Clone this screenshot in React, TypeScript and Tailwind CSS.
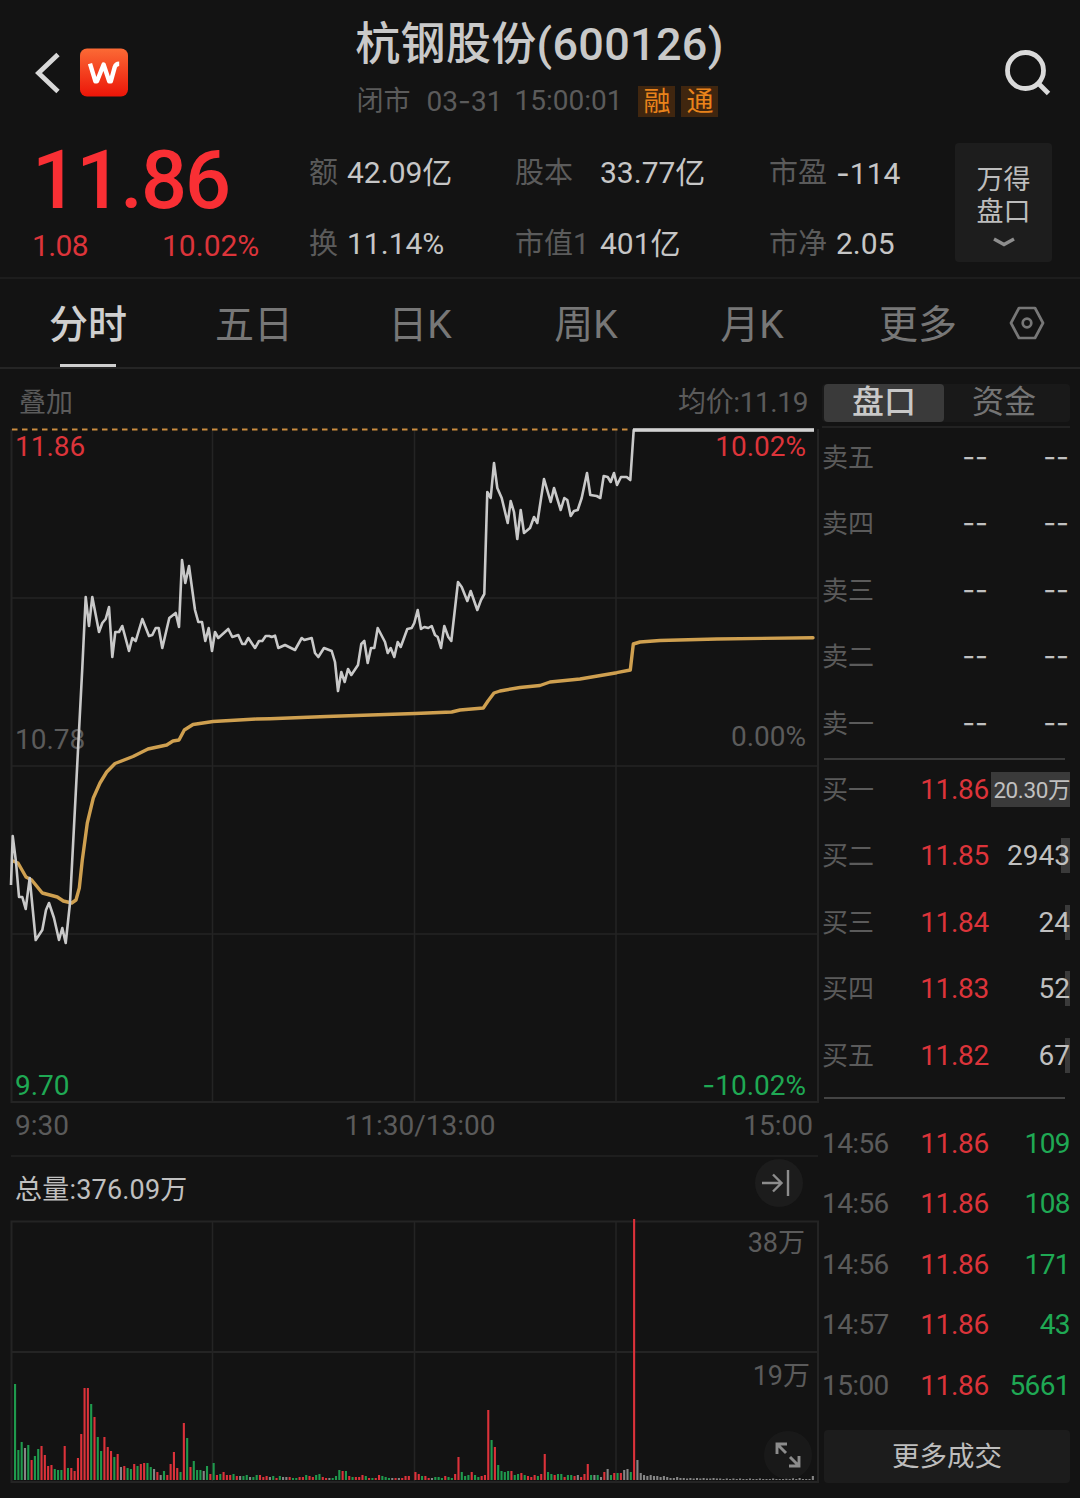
const PRICE_LINE =
  '11,885 12.7,836 16,862 19,897 22.3,897 25.7,909 29.7,878 35.7,940 42.3,930 46,910 49,903 54,918 59,940 62.3,928 65.7,943 70,903 ' +
  '82.3,668 85.7,597 89,626 92.3,597 99,632 102.3,623 105.7,619 109,607 112.3,657 115.3,632 119,632 122.3,626 129,651 132.3,638 135.7,641 ' +
  '142.3,619 149,636 152.3,635 155.7,628 158.7,628 162.3,648 169.3,618 175.7,613 179,627 182,560 185.3,583 189,566 195,610 198.3,622 202,622 ' +
  '205.3,641 208.7,628 212,651 215,632 218.3,638 228.3,629 232.3,637 238.3,635 242.3,644 245,644 248.3,638 255,648 259,641 262.3,641 265.7,636 ' +
  '269.3,636 271.7,637 275,635.7 278.3,648 285,645 295,650 301.7,638 304.3,640 311.7,638 315,653 318.3,657 324,648 331.7,651 335,662 338,691 ' +
  '341.3,672 344.7,682 348,669 351.3,675 358,665 361.3,644 364.3,641 367.7,663 371,648 374.3,648 377.7,628 385,642 387.7,653 390.7,648 394.3,657 ' +
  '397.7,642 400.7,647 407.3,629 411.7,628 414.3,623 417.7,610 421,629 424.3,627 428.3,628 431.7,626 435,635 437.7,637 441,648 444.3,626 448.3,637 ' +
  '451.3,641 458,582 461.7,587 467.3,601 470.7,591 477.3,610 481,600 484.3,594 487.3,492 490.7,498 494,463 497.3,488 501.7,498 507.7,523 510.7,501 ' +
  '514,512 517.3,539 520.7,510 524,533 530,528 534,517 537.3,523 544,479 550.7,502 554,488 560.7,510 564.3,498 567.3,500 570.7,516 574,511 ' +
  '577.7,510 581.7,498 587,473 590.3,495 596.7,496 600.3,498 603.7,476 607.7,477 610.7,482 614,473 617,485 621,477 626.7,477 630.3,480 633.7,430 814,430';

const AVG_LINE =
  '13,861 18,863 26,877 31.7,880 42.3,893 57.3,897 63.3,901 71.7,903 76,900 79.3,888 82.3,860 87.3,823 93.3,798 100,783 106.7,772 115,763.5 ' +
  '133,756.5 148,749 166.7,745 173,741 179,740 184.3,730 193,724.5 213,721.5 256.7,719 270,718.7 326.7,716.5 415,713.5 451.7,712 460,710 483.3,708 ' +
  '488,701 494,693 500,691 520,687.5 540,685.5 550,682 580,679 616.7,672.7 630.3,670 633.3,644 640,642 660,640.5 716.7,639 813,637.7';

// r / g / w = up / down / flat, followed by the bar height
const VOLUME = [
  {
    x: 15,
    bars:
      'g96 g30 g38 w32 g35 r20 g24 g31 r34 r25 r14 r15 g11 g10 g10 r34 g12 r12 r9 r22 r46 r92 r92 g76 r63 g43 g29 r43 r33 r29 g23 r26 w13 r14 g12 g11 r16 g14 r16 r17 ' +
      'g17 g13 w11 r8 w5 g9 r5 r16 r28 r12 g8 r57 g42 r13 g19 g10 g10 w9 g14 r6 g17 r5 g6 r8 r5 r5 g6 r4 w4 g4 g5 w3 g3 g5 r5 r3 r4 w3 g4 r2 g4',
  },
  {
    x: 283,
    bars:
      'w3 w3 r3 g2 g2 r3 r3 g5 r4 r3 g5 g6 r3 r2 w2 g2 g4 g10 r9 g9 r4 g3 r3 r3 r5 g4 r2 g2 r2 r5 g4 g3 g2 w2 r2 w2 r2 r4 r4 r0 r8 r6 g4 r4 r2 w2 g3 g3 g2 r4 g3 g2 ' +
      'r6 r23 g8 g4 g5 r8 g5 g3 r4 r5 r70 g40 r33 g15 g9 g8 g9 r9 g5 g6 r7 g5 r4 r3 r5 g4 r6',
  },
  {
    x: 544.7,
    bars:
      'r26 g8 g6 r5 g6 g6 r3 g5 g5 r4 w5 r3 r6 r16 g5 w5 g5 w3 r8 w11 g5 r7 g7 r7 w10 w11 g8 r261 w20 w7 w5 w4 w5 w4 w4 w3 w4 w3 w2 w2 w3 w2 w2 w1.5 w2 w1.5 w2 w1.5 w2 w1.5 ' +
      'w1.5 w2 w1.5 w1.5 w1 w1.5 w1 w1.5 w1 w1.5 w1 w1 w1.5 w1 w1 w1.5 w1 w1 w1 w1.5 w1 w1 w1 w1.5 w1 w2 w1 w2 w1 w1 w1 w4',
  },
];

const BAR_COLORS: Record<string, string> = { r: '#dc323a', g: '#1f9a4d', w: '#858585' };

const stats = [
  ['额', '42.09亿', '股本', '33.77亿', '市盈', '-114'],
  ['换', '11.14%', '市值1', '401亿', '市净', '2.05'],
];

const tabs = ['分时', '五日', '日K', '周K', '月K', '更多'];

const asks = ['卖五', '卖四', '卖三', '卖二', '卖一'];

const bids = [
  { label: '买一', price: '11.86', volume: '20.30万', bar: 79 },
  { label: '买二', price: '11.85', volume: '2943', bar: 9 },
  { label: '买三', price: '11.84', volume: '24', bar: 5 },
  { label: '买四', price: '11.83', volume: '52', bar: 5 },
  { label: '买五', price: '11.82', volume: '67', bar: 5 },
];

const trades = [
  ['14:56', '11.86', '109'],
  ['14:56', '11.86', '108'],
  ['14:56', '11.86', '171'],
  ['14:57', '11.86', '43'],
  ['15:00', '11.86', '5661'],
];

function Header() {
  return (
    <header className="flex h-[130px] justify-between">
      <div className="flex w-[299px] items-start gap-5 pl-[34px] pt-12">
        <svg className="mt-1 h-[42px] w-[26px]" viewBox="0 0 26 42" fill="none" stroke="#d8d8d8" strokeWidth={4.8}>
          <path d="M24 2.5 L4.5 21 L24 39.5" />
        </svg>
        <svg className="h-[49px] w-12" viewBox="0 0 48 48" fill="none">
          <defs>
            <linearGradient id="logo" x1="0" y1="0" x2="0" y2="1">
              <stop offset="0" stopColor="#fb6a35" />
              <stop offset="1" stopColor="#ec1508" />
            </linearGradient>
          </defs>
          <rect width="48" height="48" rx="7" fill="url(#logo)" />
          <path
            d="M10 15.2 L15.4 32.8 L17 32.8 L23.6 16 L29.2 32.8 L30.8 32.8 L34.8 18.4 Q35.8 15.2 39.2 15.2"
            stroke="#fff"
            strokeWidth={4.4}
            strokeLinejoin="round"
          />
        </svg>
      </div>
      <div className="flex flex-col items-center pt-[17px]">
        <h1 className="text-[45px] leading-14 font-medium tracking-[0.3px] whitespace-nowrap text-[#c9c9c9]">杭钢股份(600126)</h1>
        <div className="mt-3 mr-1 flex h-8 items-center text-[27px] leading-8 whitespace-nowrap text-[#5b5b5b]">
          <span>闭市</span>
          <span className="ml-4 text-[28px]">
            03<span className="font-['Inter']">-</span>31
          </span>
          <span className="ml-3 text-[28px]">15:00:01</span>
          <span className="ml-4 h-[31px] w-[37px] bg-[#40260f] text-center leading-[32px] text-[#e9831b]">融</span>
          <span className="ml-1.5 h-[31px] w-[37px] bg-[#40260f] text-center leading-[32px] text-[#e9831b]">通</span>
        </div>
      </div>
      <div className="flex w-[300px] justify-end pr-7 pt-[49px]">
        <svg className="h-12 w-12" viewBox="0 0 48 48" fill="none" stroke="#dadada" strokeWidth={4.8}>
          <circle cx="21.5" cy="21.5" r="18" />
          <path d="M34 34 L44.5 44.5" />
        </svg>
      </div>
    </header>
  );
}

function Quote() {
  return (
    <section className="flex h-[149px] border-b-2 border-[#1d1d1d]">
      <div className="w-[310px] pl-8 text-[#f92f34]">
        <div className="pt-[11px] text-[81px] leading-[80px] font-medium tracking-[-1.9px]">11.86</div>
        <div className="mt-2 flex text-[30px] leading-[34px] text-[#dc343a]">
          <span className="w-[130px] tracking-[-0.6px]">1.08</span>
          <span>10.02%</span>
        </div>
      </div>
      <div className="w-[645px] pt-[23px]">
        {stats.map((row) => (
          <div key={row[0]} className="mb-[30px] flex text-[29px] leading-10 whitespace-nowrap text-[#5b5b5b]">
            <span className="-ml-px w-[38px]">{row[0]}</span>
            <span className="w-[168px] text-[30px] text-[#c6c6c6]">{row[1]}</span>
            <span className="w-[85px]">{row[2]}</span>
            <span className="w-[169px] text-[30px] text-[#c6c6c6]">{row[3]}</span>
            <span className="w-[67px]">{row[4]}</span>
            <span className="text-[30px] text-[#c6c6c6]">
              {row[5].startsWith('-') && <span className="font-['Inter']">-</span>}
              {row[5].replace('-', '')}
            </span>
          </div>
        ))}
      </div>
      <button className="mt-[13px] flex h-[119px] w-[97px] flex-col items-center rounded-sm bg-[#1d1d1d] pt-[21px] text-[27px] leading-8 text-[#bdbdbd]">
        <span>万得</span>
        <span>盘口</span>
        <svg className="mt-2 h-3 w-[24px]" viewBox="0 0 24 12" fill="none" stroke="#8e8e8e" strokeWidth={3.4}>
          <path d="M2 3 L12 8.5 L22 3" />
        </svg>
      </button>
    </section>
  );
}

function Tabs() {
  return (
    <nav className="flex h-[90px] border-b-2 border-[#252525] pl-[5px] text-[39px] text-[#777777]">
      {tabs.map((tab, i) => (
        <div key={tab} className={`flex w-[166px] flex-col items-center pt-[18px] ${i === 0 ? 'font-medium text-[#cfcfcf]' : ''}`}>
          <span className="leading-14">{tab}</span>
          {i === 0 && <span className="mt-[11px] h-1 w-14 bg-[#cfcfcf]" />}
        </div>
      ))}
      <svg className="mt-[26px] ml-2 h-9 w-9" viewBox="0 0 36 36" fill="none" stroke="#777777" strokeWidth={2.7}>
        <path d="M10 3 H26 L34 18 L26 33 H10 L2 18 Z" strokeLinejoin="round" />
        <circle cx="18" cy="18" r="4.3" />
      </svg>
    </nav>
  );
}

function PriceChart() {
  return (
    <svg className="block h-[682px] w-[820px] text-[28px]" viewBox="0 424 820 682" fill="none">
      <g stroke="#242424" strokeWidth={1.6}>
        <path d="M11.5 429 V1102 H818 V429" strokeWidth={2} />
        <path d="M12 598 H818 M12 766 H818 M12 934 H818" />
        <path d="M212.5 430 V1102 M414.5 430 V1102 M616 430 V1102" />
      </g>
      <path d="M12 429.5 H632" stroke="#c98b3f" strokeWidth={1.8} strokeDasharray="5.5 4.5" />
      <g fill="#dc343a">
        <text x="15" y="456">11.86</text>
        <text x="806" y="456" textAnchor="end">10.02%</text>
      </g>
      <g fill="#5b5b5b">
        <text x="15" y="749">10.78</text>
        <text x="806" y="746" textAnchor="end">0.00%</text>
      </g>
      <g fill="#1fa954">
        <text x="15" y="1095">9.70</text>
        <text x="806" y="1095" textAnchor="end">
          <tspan className="font-['Inter']">-</tspan>10.02%
        </text>
      </g>
      <polyline points={AVG_LINE} stroke="#cfa050" strokeWidth={3.4} strokeLinejoin="round" strokeLinecap="round" />
      <polyline points={PRICE_LINE} stroke="#c9c9c9" strokeWidth={2.6} strokeLinejoin="round" />
      <path d="M633 430 H814" stroke="#d2d2d2" strokeWidth={3.4} />
    </svg>
  );
}

function VolumeChart() {
  return (
    <div className="relative">
      <svg className="block h-[268px] w-[820px] text-[27px]" viewBox="0 1216 820 268" fill="none">
        <g stroke="#242424" strokeWidth={1.6}>
          <path d="M11.5 1221.5 H818 V1482 H11.5 Z" strokeWidth={2} />
          <path d="M12 1352 H818" strokeWidth={2} />
          <path d="M212.5 1222 V1482 M414.5 1222 V1482 M616 1222 V1482" />
        </g>
        <g fill="#5b5b5b">
          <text x="805" y="1252" textAnchor="end">38万</text>
          <text x="810" y="1385" textAnchor="end">19万</text>
        </g>
        {VOLUME.map(({ x, bars }) =>
          bars.split(' ').map((bar, i) => {
            const height = Number(bar.slice(1));
            return (
              <rect
                key={`${x}-${i}`}
                x={x - 1 + i * 3.31}
                y={1480 - height}
                width={2.1}
                height={height}
                fill={BAR_COLORS[bar[0]]}
              />
            );
          })
        )}
      </svg>
      <button className="absolute top-[215px] left-[764px] flex h-12 w-12 items-center justify-center rounded-full bg-[#1c1c1c]/80">
        <svg className="h-[28px] w-[28px]" viewBox="0 0 28 28" fill="none" stroke="#8c8c8c" strokeWidth={2.9}>
          <path d="M3 13 V3 H13 M3.5 3.5 L12 12" />
          <path d="M25 15 V25 H15 M24.5 24.5 L16 16" />
        </svg>
      </button>
    </div>
  );
}

function OrderBook() {
  return (
    <aside className="w-[248px] pt-[15px] text-[28px]">
      <div className="flex h-[38px] rounded bg-[#191919] text-[32px] leading-[37px]">
        <span className="ml-0.5 w-[120px] rounded bg-[#3a3a3a] text-center font-medium text-[#c8c8c8]">盘口</span>
        <span className="w-[120px] text-center text-[#747474]">资金</span>
      </div>
      <div className="mt-1 border-t-2 border-[#222222]" />
      <div className="h-[330px]">
        {asks.map((label) => (
          <div key={label} className="flex h-[66.4px] items-start pt-[9px] leading-10 text-[#c0c0c0]">
            <span className="w-[82px] pt-px text-[26px] text-[#5b5b5b]">{label}</span>
            <span className="w-[84px] text-right font-['Inter'] text-[28px]">--</span>
            <span className="w-[81px] text-right font-['Inter'] text-[28px]">--</span>
          </div>
        ))}
      </div>
      <div className="mr-[5px] ml-0.5 border-t-2 border-[#3a3a3a]" />
      <div className="h-[337px]">
        {bids.map((row) => (
          <div key={row.label} className="flex h-[66.4px] items-start pt-[10px] leading-10">
            <span className="w-[80px] text-[26px] text-[#5b5b5b]">{row.label}</span>
            <span className="w-[87px] text-right tracking-[-0.3px] text-[#dc343a]">{row.price}</span>
            <span className="relative h-10 flex-1 text-right text-[#c0c0c0]">
              <span className="absolute top-0.5 right-0 h-[35px] bg-[#3a3a3a]" style={{ width: row.bar }} />
              <span className={`relative ${row.volume.includes('万') ? '-top-px text-[22.5px] tracking-[-0.4px]' : ''}`}>{row.volume}</span>
            </span>
          </div>
        ))}
      </div>
      <div className="mr-[5px] ml-0.5 border-t-2 border-[#444444]" />
      <div className="h-[331px] pt-[25px]">
        {trades.map(([time, price, volume], i) => (
          <div key={i} className="flex h-[60.4px] leading-10">
            <span className="w-[81px] tracking-[-0.6px] text-[#5b5b5b]">{time}</span>
            <span className="w-[86px] text-right tracking-[-0.3px] text-[#dc343a]">{price}</span>
            <span className="flex-1 text-right tracking-[-0.6px] text-[#1fa954]">{volume}</span>
          </div>
        ))}
      </div>
      <button className="ml-0.5 h-[53px] w-[246px] rounded-sm bg-[#1c1c1c] text-[27.5px] leading-[50px] text-[#bdbdbd]">更多成交</button>
    </aside>
  );
}

export default function App() {
  return (
    <div className="h-[1498px] w-[1080px] overflow-hidden bg-[#131313] font-['Roboto','Noto_Sans_CJK_SC',sans-serif]">
      <Header />
      <Quote />
      <Tabs />
      <main className="flex gap-0.5">
        <div className="w-[820px]">
          <div className="flex h-[55px] justify-between pt-[14px] pr-3 pl-[19px] text-[28px] leading-10 text-[#5b5b5b]">
            <span className="text-[27px]">叠加</span>
            <span className="tracking-[-0.4px]">均价:11.19</span>
          </div>
          <PriceChart />
          <div className="flex h-[49px] justify-between pr-[7px] pl-[15px] text-[28px] leading-10 text-[#5b5b5b]">
            <span className="w-[82px]">9:30</span>
            <span>11:30/13:00</span>
            <span className="w-[70px] text-right">15:00</span>
          </div>
          <div className="mr-0.5 ml-[11px] border-t-2 border-[#1e1e1e]" />
          <div className="flex h-[59px] items-start justify-between pr-[17px] pl-[15px] text-[27px] text-[#c0c0c0]">
            <span className="pt-[13px] leading-10 tracking-[0.2px]">总量:376.09万</span>
            <button className="mt-0.5 flex h-12 w-12 items-center justify-center rounded-full bg-[#1c1c1c]">
              <svg className="-ml-1.5 h-[28px] w-[30px]" viewBox="0 0 30 28" fill="none" stroke="#8c8c8c" strokeWidth={2.4}>
                <path d="M1 14 H20 M12 5.5 L20.5 14 L12 22.5 M27 1 V27" />
              </svg>
            </button>
          </div>
          <VolumeChart />
        </div>
        <OrderBook />
      </main>
    </div>
  );
}
